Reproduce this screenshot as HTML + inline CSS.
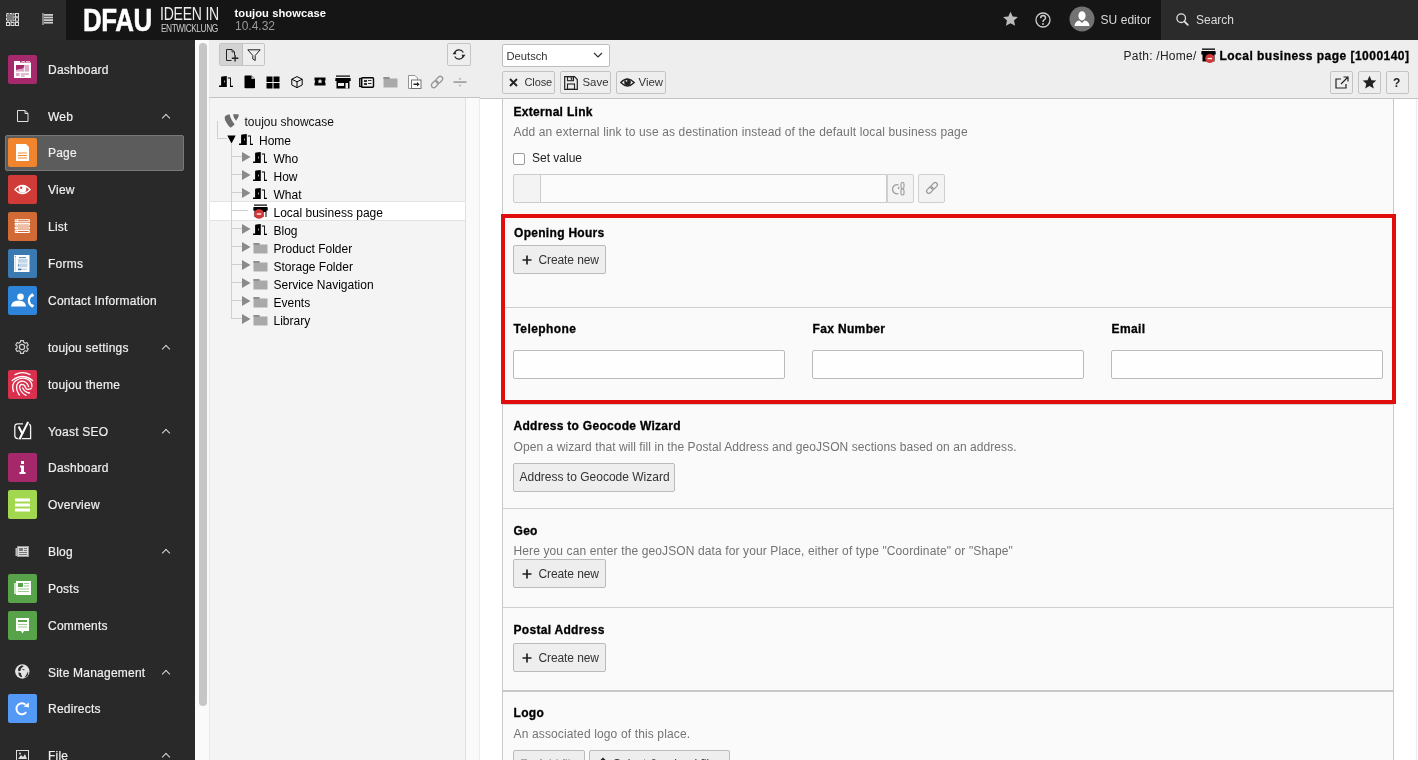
<!DOCTYPE html>
<html><head><meta charset="utf-8"><style>
*{box-sizing:border-box;margin:0;padding:0}
html,body{width:1418px;height:760px;overflow:hidden;background:#fff;font-family:"Liberation Sans",sans-serif;font-size:12px;color:#000}
.a{position:absolute}
.t{position:absolute;white-space:nowrap;line-height:12px}
svg{position:absolute;overflow:visible}
#top{left:0;top:0;width:1418px;height:40px;background:#151515}
#topl{left:0;top:0;width:66px;height:40px;background:#2a2a2a}
#search{left:1161px;top:0;width:257px;height:40px;background:#2b2b2b}
#mm{left:0;top:40px;width:195px;height:720px;background:#292929}
.mi{position:absolute;left:8px;width:29px;height:29px;border-radius:2px}
.ml{position:absolute;left:48px;color:#efefef;white-space:nowrap;line-height:12px;letter-spacing:0.22px;-webkit-text-stroke:0.2px #efefef}
.chev{position:absolute;left:163px;width:6px;height:6px;border-left:1.4px solid #d8d8d8;border-top:1.4px solid #d8d8d8;transform:rotate(45deg)}
#scr{left:195px;top:40px;width:14px;height:720px;background:#fafafa}
#thumb{left:199px;top:43px;width:8px;height:663px;background:#c6c6c6;border-radius:4px}
#tree{left:209px;top:40px;width:271px;height:720px;background:#f4f4f4;border-left:1px solid #e8e8e8}
#treetb{left:209px;top:40px;width:271px;height:58px;background:#eee;border-bottom:1px solid #c4c4c4}
#treer{left:465px;top:98px;width:15px;height:662px;background:#fafafa;border-left:1px solid #e0e0e0}
#dh{left:480px;top:40px;width:938px;height:59px;background:#eee;border-bottom:1px solid #c4c4c4}
.btn{position:absolute;background:#eee;border:1px solid #c3c3c3;border-radius:2px}
.sec{position:absolute;left:502px;width:892px;background:#fafafa;border-left:1px solid #c8c8c8;border-right:1px solid #c8c8c8}
.hr{position:absolute;left:502px;width:892px;height:1px;background:#cfcfcf}
.lbl{position:absolute;white-space:nowrap;font-weight:bold;letter-spacing:0.3px;line-height:12px;color:#000;-webkit-text-stroke:0.3px #000}
.desc{position:absolute;white-space:nowrap;color:#737373;letter-spacing:0.14px;line-height:12px}
.inp{position:absolute;background:#fefefe;border:1px solid #bbb;border-radius:2px}
.cbtn{position:absolute;background:#eee;border:1px solid #bbb;border-radius:2px;color:#333}
.tl{position:absolute;background:#cfcfcf}
.ti{position:absolute;white-space:nowrap;line-height:12px;color:#000}
</style></head><body><div id="wrap" style="position:absolute;left:0;top:0;width:1418px;height:760px;will-change:transform">
<div id="top" class="a"></div><div id="topl" class="a"></div><div id="search" class="a"></div>
<div id="mm" class="a"></div>
<div id="scr" class="a"></div><div id="thumb" class="a"></div><div id="tree" class="a"></div><div id="treetb" class="a"></div><div id="treer" class="a"></div>
<div id="dh" class="a"></div>
<div class="a" style="left:479px;top:98px;width:1px;height:662px;background:#ececec"></div>
<div class="a" style="left:5px;top:135px;width:179px;height:36px;background:#5c5c5c;border:1px solid #787878;border-radius:2px"></div>
<div class="mi" style="top:55px;background:#a6296b"></div>
<svg style="left:8px;top:55px" width="29" height="29"><rect x="6" y="7.5" width="17" height="15.5" fill="#fff"/><rect x="6" y="6" width="6" height="2" fill="#fff"/><rect x="13.5" y="6" width="3.5" height="1" fill="#e2b5cd"/><rect x="18" y="6" width="4" height="1" fill="#e2b5cd"/><rect x="8" y="10" width="8.3" height="6.6" fill="#dcaac6"/><path d="M8 10 H16.3 V11.5 L14.5 13.8 L11.5 14 L8 15Z" fill="#a6296b"/><rect x="17" y="10" width="4" height="6.6" fill="#dcaac6"/><rect x="8" y="18" width="3.6" height="3" fill="#dcaac6"/><rect x="13" y="18.5" width="8" height="1" fill="#c77aa3"/><rect x="13" y="20.5" width="3.5" height="1" fill="#c77aa3"/></svg>
<div class="ml" style="left:48px;top:63.90px;font-size:12px;line-height:12px;">Dashboard</div>
<div class="mi" style="top:138px;background:#f0852d"></div>
<svg style="left:8px;top:138px" width="29" height="29"><path d="M8 6 H18 L21 9 V23 H8Z" fill="#fff"/><rect x="10" y="14" width="9" height="2" fill="#f7c8a0"/><rect x="10" y="17" width="9" height="1" fill="#f0852d"/><rect x="10" y="19.5" width="9" height="1" fill="#f0852d"/></svg>
<div class="ml" style="left:48px;top:146.90px;font-size:12px;line-height:12px;">Page</div>
<div class="mi" style="top:175px;background:#d13b37"></div>
<svg style="left:8px;top:175px" width="29" height="29"><path d="M7 14.5 Q14.5 6.5 22 14.5 Q14.5 22.5 7 14.5Z" fill="none" stroke="#fff" stroke-width="1.4"/><circle cx="14.5" cy="14" r="3.8" fill="#fff"/><circle cx="13.2" cy="12.8" r="1.2" fill="#d13b37"/></svg>
<div class="ml" style="left:48px;top:183.90px;font-size:12px;line-height:12px;">View</div>
<div class="mi" style="top:212px;background:#d26a36"></div>
<svg style="left:8px;top:212px" width="29" height="29"><rect x="6.7" y="7.2" width="15.2" height="3" rx="0.8" fill="#fff"/><rect x="9.8" y="8.2" width="11" height="1" rx="0.5" fill="#d26a36"/><rect x="7.7" y="8.2" width="1" height="1" fill="#d26a36"/><rect x="6.7" y="10.8" width="15.2" height="3" rx="0.8" fill="#fff"/><rect x="9.8" y="11.8" width="11" height="1" rx="0.5" fill="#edbfa5"/><rect x="7.7" y="11.8" width="1" height="1" fill="#edbfa5"/><rect x="6.7" y="14.4" width="15.2" height="3" rx="0.8" fill="#fff"/><rect x="9.8" y="15.4" width="11" height="1" rx="0.5" fill="#edbfa5"/><rect x="7.7" y="15.4" width="1" height="1" fill="#edbfa5"/><rect x="6.7" y="18.0" width="15.2" height="3" rx="0.8" fill="#fff"/><rect x="9.8" y="19.0" width="11" height="1" rx="0.5" fill="#d26a36"/><rect x="7.7" y="19.0" width="1" height="1" fill="#d26a36"/><rect x="9.8" y="12.8" width="11" height="4.2" fill="#edbfa5"/></svg>
<div class="ml" style="left:48px;top:220.90px;font-size:12px;line-height:12px;">List</div>
<div class="mi" style="top:249px;background:#3a7ab0"></div>
<svg style="left:8px;top:249px" width="29" height="29"><rect x="6" y="6" width="15.5" height="17" fill="#fff"/><rect x="6.6" y="6.6" width="1.3" height="15.8" fill="#cfe0ef"/><rect x="7" y="7" width="0.8" height="0.8" fill="#3a7ab0"/><rect x="11" y="8.2" width="7" height="0.9" fill="#3a7ab0"/><rect x="10" y="10" width="9.5" height="3.8" fill="#c3d6e7"/><rect x="10" y="14.5" width="9.5" height="3.8" fill="#c3d6e7"/><rect x="10" y="15.5" width="0.9" height="1.6" fill="#3a7ab0"/><rect x="10" y="19.6" width="3.5" height="1.6" fill="#3a7ab0"/><rect x="14" y="19.6" width="5" height="1.6" fill="#c3d6e7"/></svg>
<div class="ml" style="left:48px;top:257.90px;font-size:12px;line-height:12px;">Forms</div>
<div class="mi" style="top:286px;background:#2e84d8"></div>
<svg style="left:8px;top:286px" width="29" height="29"><circle cx="12.5" cy="10.8" r="3.3" fill="#fff"/><path d="M3 20.5 Q3.5 14.5 10.5 14.5 Q17.5 14.5 18 20.5Z" fill="#fff"/><path d="M24.3 7.3 Q19.8 10 19.8 14.5 Q19.8 19 24.3 21.7 L26.2 19.6 Q25.2 18 23.4 18 Q22 16.3 22 14.5 Q22 12.7 23.4 11 Q25.2 11 26.2 9.4Z" fill="#fff"/></svg>
<div class="ml" style="left:48px;top:294.90px;font-size:12px;line-height:12px;">Contact Information</div>
<div class="mi" style="top:370px;background:#d9304e"></div>
<svg style="left:8px;top:370px" width="29" height="29"><path d="M7 4.6 Q14.5 0.8 22 4.6" fill="none" stroke="#fff" stroke-width="1.3" stroke-linecap="round"/><path d="M4.2 10.5 Q14.5 2.5 24.6 10.5" fill="none" stroke="#fff" stroke-width="1.3" stroke-linecap="round"/><path d="M5.5 21.5 Q3 14 8 10.5 Q14.5 6 21 10 Q24.5 13 23.8 17" fill="none" stroke="#fff" stroke-width="1.3" stroke-linecap="round"/><path d="M11.4 25 Q7.5 19.5 9 14.5 Q11 11 14.3 11.2 Q19 11.5 20.6 16.6" fill="none" stroke="#fff" stroke-width="1.3" stroke-linecap="round"/><path d="M18.1 25.3 Q12.5 22.5 11.6 17.5 Q11.5 14.5 14 14.3 Q16.8 14.3 17.5 17.5 Q18.5 20.5 23.2 18.6" fill="none" stroke="#fff" stroke-width="1.3" stroke-linecap="round"/><path d="M21.5 23 Q16.5 22 14.7 17.9" fill="none" stroke="#fff" stroke-width="1.3" stroke-linecap="round"/></svg>
<div class="ml" style="left:48px;top:378.90px;font-size:12px;line-height:12px;">toujou theme</div>
<div class="mi" style="top:453px;background:#a4286a"></div>
<svg style="left:8px;top:453px" width="29" height="29"><rect x="13" y="8" width="3" height="3" fill="#fff"/><path d="M12 12.5 H16 V19 H17.5 V21 H11.5 V19 H13 V14.5 H12Z" fill="#fff"/></svg>
<div class="ml" style="left:48px;top:461.90px;font-size:12px;line-height:12px;">Dashboard</div>
<div class="mi" style="top:490px;background:#a1d84f"></div>
<svg style="left:8px;top:490px" width="29" height="29"><rect x="7" y="8.5" width="15" height="3" fill="#fff"/><rect x="7" y="13.5" width="15" height="3" fill="#fff"/><rect x="7" y="18.5" width="15" height="3" fill="#fff"/></svg>
<div class="ml" style="left:48px;top:498.90px;font-size:12px;line-height:12px;">Overview</div>
<div class="mi" style="top:574px;background:#58a34a"></div>
<svg style="left:8px;top:574px" width="29" height="29"><rect x="6" y="9" width="3" height="11" fill="#c9e3c3"/><rect x="8" y="7" width="15" height="14" fill="#fff"/><rect x="10" y="9" width="5" height="4" fill="#58a34a"/><rect x="16" y="9" width="5" height="1" fill="#9cc994"/><rect x="16" y="11.5" width="5" height="1" fill="#9cc994"/><rect x="10" y="14.5" width="11" height="1" fill="#9cc994"/><rect x="10" y="17" width="11" height="1" fill="#9cc994"/></svg>
<div class="ml" style="left:48px;top:582.90px;font-size:12px;line-height:12px;">Posts</div>
<div class="mi" style="top:611px;background:#58a34a"></div>
<svg style="left:8px;top:611px" width="29" height="29"><path d="M8 7 H21 V20 H16 L14.5 22.5 L13 20 H8Z" fill="#fff"/><rect x="10" y="9" width="9" height="2" fill="#58a34a"/><rect x="10" y="13" width="9" height="1" fill="#9cc994"/><rect x="10" y="15.5" width="9" height="1" fill="#9cc994"/></svg>
<div class="ml" style="left:48px;top:619.90px;font-size:12px;line-height:12px;">Comments</div>
<div class="mi" style="top:694px;background:#5599f7"></div>
<svg style="left:8px;top:694px" width="29" height="29"><path d="M18.2 18.2 A5.5 5.5 0 1 1 17.6 10.6" fill="none" stroke="#fff" stroke-width="1.9"/><path d="M15.6 12.6 L20.9 8.6 L20.9 13.6Z" fill="#fff"/></svg>
<div class="ml" style="left:48px;top:702.90px;font-size:12px;line-height:12px;">Redirects</div>
<svg style="left:16px;top:109px" width="14" height="14"><path d="M1.5 1.5 H9 L12 4.5 V12.5 H1.5Z" fill="none" stroke="#e0e0e0" stroke-width="1"/><path d="M9 1.5 V4.5 H12" fill="none" stroke="#e0e0e0" stroke-width="1"/></svg>
<div class="ml" style="left:48px;top:110.70px;font-size:12px;line-height:12px;">Web</div>
<div class="chev" style="top:114.5px"></div>
<svg style="left:13.8px;top:339.0px" width="16" height="16"><path d="M6.37 3.27 L6.52 1.57 L9.48 1.57 L9.63 3.27 L11.28 4.23 L12.83 3.50 L14.31 6.07 L12.91 7.05 L12.91 8.95 L14.31 9.93 L12.83 12.50 L11.28 11.77 L9.63 12.73 L9.48 14.43 L6.52 14.43 L6.37 12.73 L4.72 11.77 L3.17 12.50 L1.69 9.93 L3.09 8.95 L3.09 7.05 L1.69 6.07 L3.17 3.50 L4.72 4.23Z" fill="none" stroke="#cfcfcf" stroke-width="1.2" stroke-linejoin="round"/><circle cx="8" cy="8" r="2.6" fill="none" stroke="#cfcfcf" stroke-width="1.2"/></svg>
<div class="ml" style="left:48px;top:342.20px;font-size:12px;line-height:12px;">toujou settings</div>
<div class="chev" style="top:346.0px"></div>
<svg style="left:14px;top:421px" width="18" height="20"><path d="M9 2.8 H3.8 Q0.8 2.8 0.8 5.8 V14.6 Q0.8 17.6 3.8 17.6 H16.6 V5.8 Q16.6 2.8 14 2.8" fill="none" stroke="#f2f2f2" stroke-width="1.3"/><path d="M4.4 5.6 L8.8 13.6" stroke="#292929" stroke-width="3.6"/><path d="M14.4 0.8 L5.6 18.6" stroke="#292929" stroke-width="3.4"/><path d="M4.6 5.6 L8.6 13.2" stroke="#fff" stroke-width="2.1"/><path d="M14.1 0.9 L5.5 18.2" stroke="#fff" stroke-width="2.1"/></svg>
<div class="ml" style="left:48px;top:425.70px;font-size:12px;line-height:12px;">Yoast SEO</div>
<div class="chev" style="top:429.5px"></div>
<svg style="left:15px;top:544.5px" width="15" height="13"><rect x="2" y="1" width="12" height="11" fill="#999" /><rect x="3" y="2" width="10" height="9" fill="#ddd"/><rect x="4" y="3" width="4" height="3" fill="#777"/><rect x="9" y="3" width="3" height="1" fill="#777"/><rect x="9" y="5" width="3" height="1" fill="#777"/><rect x="4" y="7" width="8" height="1" fill="#777"/><rect x="4" y="9" width="8" height="1" fill="#777"/><rect x="0.5" y="3" width="2" height="8" fill="#bbb"/></svg>
<div class="ml" style="left:48px;top:545.70px;font-size:12px;line-height:12px;">Blog</div>
<div class="chev" style="top:549.5px"></div>
<svg style="left:15px;top:663.8px" width="15" height="15"><circle cx="7.3" cy="7.5" r="7.2" fill="#e4e4e4"/><path d="M7.2 1.3 Q4.8 2 3.8 3.6 Q2.6 5.5 3.3 7.2 Q4.6 7.3 5.8 6.6 Q5.2 5 6.6 3.8 Q8 2.7 8.6 2.9Z M3.2 8.6 Q3.3 11 5.2 12.8 L7.2 13.2 Q6.9 11.4 6.2 10.8 Q6.6 9.4 5.2 8.8Z" fill="#2a2a2a"/><path d="M12.9 7.4 Q12 9.8 10.4 12.2 L9.2 13.4 Q11 13.4 12.3 12 Q13.4 10.2 13.2 8.2Z" fill="#2a2a2a"/><path d="M7.4 5.4 L9.5 5.9" stroke="#2a2a2a" stroke-width="0.9"/></svg>
<div class="ml" style="left:48px;top:666.70px;font-size:12px;line-height:12px;">Site Management</div>
<div class="chev" style="top:670.5px"></div>
<svg style="left:15px;top:748px" width="15" height="14"><rect x="1.5" y="2.5" width="12" height="10" fill="none" stroke="#ddd" stroke-width="1"/><path d="M3 11 L6 7 L8 9 L10 6 L12 11Z" fill="#ddd"/><circle cx="5" cy="5.5" r="1" fill="#ddd"/></svg>
<div class="ml" style="left:48px;top:749.70px;font-size:12px;line-height:12px;">File</div>
<div class="chev" style="top:753.5px"></div>
<svg style="left:6px;top:13px" width="13" height="13"><rect x="0.5" y="0.5" width="7.6" height="7.6" fill="#7a7a7a" stroke="#e0e0e0" stroke-width="1" stroke-dasharray="2.2 1.2"/><rect x="9.5" y="0.5" width="3" height="3.3" fill="none" stroke="#ddd" stroke-width="1"/><rect x="9.5" y="4.8" width="3" height="3.3" fill="none" stroke="#ddd" stroke-width="1"/><rect x="0.5" y="9.5" width="3" height="3" fill="none" stroke="#ddd" stroke-width="1"/><rect x="5" y="9.5" width="3" height="3" fill="none" stroke="#ddd" stroke-width="1"/><rect x="9.5" y="9.5" width="3" height="3" fill="none" stroke="#ddd" stroke-width="1"/></svg>
<svg style="left:42px;top:13px" width="12" height="12"><rect x="0.5" y="0" width="1" height="12" fill="#ddd"/><rect x="2" y="1.0" width="9" height="1.8" fill="#ccc"/><rect x="2" y="3.6" width="9" height="1.8" fill="#ccc"/><rect x="2" y="6.2" width="9" height="1.8" fill="#ccc"/><rect x="2" y="8.8" width="9" height="1.8" fill="#ccc"/></svg>
<div class="t" style="left:83px;top:5px;font-size:31px;line-height:31px;font-weight:bold;color:#fff;transform:scaleX(0.836);transform-origin:0 0;letter-spacing:-0.5px;-webkit-text-stroke:0.5px #fff">DFAU</div>
<div class="t" style="left:160px;top:5.8px;font-size:17.8px;line-height:17.8px;color:#eee;transform:scaleX(0.79);transform-origin:0 0;letter-spacing:-0.3px">IDEEN IN</div>
<div class="t" style="left:160.5px;top:22.5px;font-size:11px;line-height:11px;color:#ccc;transform:scaleX(0.76);transform-origin:0 0;letter-spacing:-0.6px">ENTWICKLUNG</div>
<div class="t" style="left:234.5px;top:7.90px;font-size:11px;line-height:11px;font-weight:bold;color:#fff;letter-spacing:0.05px;font-size:11.2px">toujou showcase</div>
<div class="t" style="left:235px;top:20.10px;font-size:12px;line-height:12px;color:#999">10.4.32</div>
<svg style="left:1002px;top:11px" width="17" height="16"><path d="M8.5 0.8 L10.7 5.6 L15.9 6.1 L12 9.6 L13.1 14.8 L8.5 12.2 L3.9 14.8 L5 9.6 L1.1 6.1 L6.3 5.6Z" fill="#bbb"/></svg>
<svg style="left:1035px;top:12px" width="16" height="16"><circle cx="8" cy="8" r="7" fill="none" stroke="#ccc" stroke-width="1.3"/><path d="M5.6 6.2 Q5.8 3.6 8.2 3.6 Q10.6 3.8 10.5 6 Q10.4 7.4 8.8 8.2 Q8 8.7 8 10" fill="none" stroke="#ccc" stroke-width="1.5"/><circle cx="8" cy="12" r="0.9" fill="#ccc"/></svg>
<svg style="left:1069px;top:6px" width="26" height="26"><circle cx="13" cy="13" r="12.5" fill="#737373"/><ellipse cx="13" cy="9.8" rx="3.6" ry="4.6" fill="#fff"/><path d="M5.5 20 Q6 15 10.5 14.5 L13 17 L15.5 14.5 Q20 15 20.5 20Z" fill="#fff"/></svg>
<div class="t" style="left:1100.5px;top:13.60px;font-size:12px;line-height:12px;color:#dcdcdc;letter-spacing:0.05px">SU editor</div>
<svg style="left:1176px;top:13px" width="13" height="13"><circle cx="5.2" cy="5.2" r="4.3" fill="none" stroke="#e0e0e0" stroke-width="1.3"/><path d="M8.3 8.3 L11.8 11.8" stroke="#e0e0e0" stroke-width="1.8" stroke-linecap="round"/></svg>
<div class="t" style="left:1196px;top:14.30px;font-size:12px;line-height:12px;color:#dcdcdc">Search</div>
<div class="a" style="left:219px;top:43px;width:46px;height:23px;border:1px solid #c4c4c4;border-radius:2px;background:#eee;overflow:hidden"><div class="a" style="left:0;top:0;width:23px;height:21px;background:#d3d3d3;border-right:1px solid #c0c0c0"></div></div>
<svg style="left:225px;top:48px" width="15" height="15"><path d="M6.5 12.5 H1.5 V1.5 H7 L9.5 4 V7" fill="none" stroke="#222" stroke-width="1" stroke-linejoin="miter"/><path d="M7 1.5 V4 H9.5" fill="none" stroke="#222" stroke-width="0.8"/><path d="M6.8 10.2 H13.4 M10.1 6.9 V13.5" stroke="#222" stroke-width="1.4"/></svg>
<svg style="left:247px;top:49px" width="14" height="13"><path d="M0.8 0.8 H13.2 L8.2 6.5 V11.5 L5.8 10 V6.5Z" fill="none" stroke="#222" stroke-width="1"/></svg>
<div class="a" style="left:447px;top:43px;width:24px;height:23px;border:1px solid #c4c4c4;border-radius:2px;background:#eee"></div>
<svg style="left:452px;top:48px" width="14" height="13"><path d="M2.5 5.2 A4.8 4.8 0 0 1 11.3 4.5" fill="none" stroke="#222" stroke-width="1.2"/><path d="M11.5 7.8 A4.8 4.8 0 0 1 2.7 8.5" fill="none" stroke="#222" stroke-width="1.2"/><path d="M0.5 6.3 L2.6 3.6 L4.6 6.3Z" fill="#222"/><path d="M9.4 6.7 L11.4 9.4 L13.5 6.7Z" fill="#222"/></svg>
<svg style="left:219px;top:76px" width="15" height="12"><path d="M0 9.6 H2.1 V1.2 Q2.2 0.6 3 0.5 L7.8 -0.1 V11.1 H0Z" fill="#000"/><rect x="5" y="4.6" width="0.9" height="1.8" fill="#bbb"/><path d="M8.8 1.4 H11.9 V9.7 H14 V11.1 H11 V2.6 H8.8Z" fill="#000"/></svg>
<svg style="left:244px;top:75px" width="12" height="14"><path d="M0.5 1.5 Q0.5 0.5 1.5 0.5 H7.5 L11 4 V12.5 Q11 13.3 10 13.3 H1.5 Q0.5 13.3 0.5 12.5Z" fill="#000"/><path d="M7.5 0.5 V4 H11" fill="#bbb"/></svg>
<svg style="left:266px;top:76px" width="14" height="13"><rect x="0.5" y="0.5" width="6" height="5.5" fill="#000"/><rect x="7.5" y="0.5" width="6" height="5.5" fill="#000"/><rect x="0.5" y="7" width="6" height="5.5" fill="#000"/><rect x="7.5" y="7" width="6" height="5.5" fill="#000"/></svg>
<svg style="left:290.5px;top:76px" width="13" height="13"><path d="M6 0.6 L11.2 3.2 V9 L6 11.6 L0.8 9 V3.2Z M0.8 3.2 L6 5.8 L11.2 3.2 M6 5.8 V11.6" fill="none" stroke="#000" stroke-width="1"/></svg>
<svg style="left:314px;top:77px" width="12" height="9"><path d="M0.5 0.5 H11.5 V3 Q10 4.5 11.5 6 V8.5 H0.5 V6 Q2 4.5 0.5 3Z" fill="#000"/><path d="M6 1.8 L6.8 3.6 L8.6 3.7 L7.2 4.8 L7.7 6.6 L6 5.6 L4.3 6.6 L4.8 4.8 L3.4 3.7 L5.2 3.6Z" fill="#eee"/></svg>
<svg style="left:335px;top:75px" width="16" height="14"><rect x="1" y="0.5" width="14" height="1.2" fill="#000"/><path d="M0.5 3 H15.5 L15.8 6 H0.2Z" fill="#000"/><rect x="1.5" y="6" width="13" height="7.5" fill="#000"/><rect x="3" y="8" width="6" height="3" fill="#eee"/><rect x="10.5" y="8" width="2.5" height="5.5" fill="#eee"/></svg>
<svg style="left:359px;top:77px" width="15" height="11"><rect x="0.7" y="1.5" width="2" height="8" fill="none" stroke="#000" stroke-width="1.2"/><rect x="2.5" y="0.7" width="12" height="9.6" rx="1" fill="none" stroke="#000" stroke-width="1.4"/><rect x="5" y="3" width="3" height="2" fill="#333"/><rect x="9" y="3" width="3.5" height="1" fill="#333"/><rect x="5" y="6" width="3" height="2" fill="#333"/><rect x="9" y="6" width="3.5" height="1" fill="#333"/></svg>
<svg style="left:383px;top:76px" width="15" height="12"><path d="M0.5 1 H6 L7 2.5 H14.5 V11.5 H0.5Z" fill="#a9a9a9"/><rect x="0.5" y="1" width="6" height="2" fill="#8f8f8f"/></svg>
<svg style="left:408px;top:75px" width="14" height="14"><path d="M0.5 0.5 H7 L9.5 3 V13.5 H0.5Z" fill="#fafafa" stroke="#888" stroke-width="0.9"/><rect x="3.5" y="5" width="9.5" height="8.5" fill="#fff" stroke="#666" stroke-width="0.9"/><path d="M5.5 10 H9 V11.5 L11.5 9.2 L9 7 V8.5 H5.5Z" fill="#222"/></svg>
<svg style="left:430px;top:75px" width="14" height="14"><g transform="rotate(-45 7 7)"><rect x="0" y="4.6" width="7.6" height="4.8" rx="2.4" fill="none" stroke="#999" stroke-width="1.3"/><rect x="6.4" y="4.6" width="7.6" height="4.8" rx="2.4" fill="none" stroke="#999" stroke-width="1.3"/></g></svg>
<svg style="left:453px;top:76px" width="14" height="12"><rect x="0.5" y="5.3" width="13" height="1.6" fill="#999"/><path d="M5.5 3.5 L7 1.5 L8.5 3.5Z M5.5 8.8 L7 10.8 L8.5 8.8Z" fill="#aaa"/></svg>
<div class="a" style="left:210px;top:201px;width:255px;height:20px;background:#fff;border-top:1px solid #e3e3e3;border-bottom:1px solid #e3e3e3"></div>
<div class="tl" style="left:217px;top:121px;width:1px;height:18px"></div><div class="tl" style="left:217px;top:138px;width:10px;height:1px"></div>
<div class="tl" style="left:231px;top:144px;width:1px;height:175px"></div>
<div class="tl" style="left:231px;top:156px;width:12px;height:1px"></div>
<div class="tl" style="left:231px;top:174px;width:12px;height:1px"></div>
<div class="tl" style="left:231px;top:192px;width:12px;height:1px"></div>
<div class="tl" style="left:231px;top:210px;width:17px;height:1px"></div>
<div class="tl" style="left:231px;top:228px;width:12px;height:1px"></div>
<div class="tl" style="left:231px;top:246px;width:12px;height:1px"></div>
<div class="tl" style="left:231px;top:264px;width:12px;height:1px"></div>
<div class="tl" style="left:231px;top:282px;width:12px;height:1px"></div>
<div class="tl" style="left:231px;top:300px;width:12px;height:1px"></div>
<div class="tl" style="left:231px;top:318px;width:12px;height:1px"></div>
<svg style="left:224px;top:114px" width="16" height="14"><path d="M0.8 2.6 Q2.5 0.6 5.6 0.2 Q6.2 4.5 10.6 10.3 Q8.5 13 6.5 13.8 Q3.5 11 1.2 6.5 Q0.5 4.5 0.8 2.6Z" fill="#6d6d6d"/><path d="M9 0.3 L14.6 0.3 Q15 1.5 14.2 3.2 L12 6.8 Q9.6 4 9 0.3Z" fill="#6d6d6d"/></svg>
<div class="ti" style="left:244.5px;top:116.10px;font-size:12px;line-height:12px;color:#111">toujou showcase</div>
<svg style="left:227px;top:135px" width="9" height="9"><path d="M0.3 0.5 H8.7 L4.5 8.5Z" fill="#000"/></svg>
<svg style="left:239px;top:133.5px" width="15" height="12"><path d="M0 9.6 H2.1 V1.2 Q2.2 0.6 3 0.5 L7.8 -0.1 V11.1 H0Z" fill="#000"/><rect x="5" y="4.6" width="0.9" height="1.8" fill="#bbb"/><path d="M8.8 1.4 H11.9 V9.7 H14 V11.1 H11 V2.6 H8.8Z" fill="#000"/></svg>
<div class="ti" style="left:259px;top:134.60px;font-size:12px;line-height:12px;">Home</div>
<svg style="left:242px;top:152px" width="9" height="10"><path d="M0 0 V10 L8.5 5Z" fill="#8a8a8a"/></svg>
<svg style="left:253px;top:151.5px" width="15" height="12"><path d="M0 9.6 H2.1 V1.2 Q2.2 0.6 3 0.5 L7.8 -0.1 V11.1 H0Z" fill="#000"/><rect x="5" y="4.6" width="0.9" height="1.8" fill="#bbb"/><path d="M8.8 1.4 H11.9 V9.7 H14 V11.1 H11 V2.6 H8.8Z" fill="#000"/></svg>
<div class="ti" style="left:273.5px;top:152.60px;font-size:12px;line-height:12px;">Who</div>
<svg style="left:242px;top:170px" width="9" height="10"><path d="M0 0 V10 L8.5 5Z" fill="#8a8a8a"/></svg>
<svg style="left:253px;top:169.5px" width="15" height="12"><path d="M0 9.6 H2.1 V1.2 Q2.2 0.6 3 0.5 L7.8 -0.1 V11.1 H0Z" fill="#000"/><rect x="5" y="4.6" width="0.9" height="1.8" fill="#bbb"/><path d="M8.8 1.4 H11.9 V9.7 H14 V11.1 H11 V2.6 H8.8Z" fill="#000"/></svg>
<div class="ti" style="left:273.5px;top:170.60px;font-size:12px;line-height:12px;">How</div>
<svg style="left:242px;top:188px" width="9" height="10"><path d="M0 0 V10 L8.5 5Z" fill="#8a8a8a"/></svg>
<svg style="left:253px;top:187.5px" width="15" height="12"><path d="M0 9.6 H2.1 V1.2 Q2.2 0.6 3 0.5 L7.8 -0.1 V11.1 H0Z" fill="#000"/><rect x="5" y="4.6" width="0.9" height="1.8" fill="#bbb"/><path d="M8.8 1.4 H11.9 V9.7 H14 V11.1 H11 V2.6 H8.8Z" fill="#000"/></svg>
<div class="ti" style="left:273.5px;top:188.60px;font-size:12px;line-height:12px;">What</div>
<svg style="left:253px;top:204px" width="15" height="15"><rect x="1" y="0.5" width="13" height="1.2" fill="#000"/><path d="M0.5 3 H14.5 L14.8 6.5 H0.2Z" fill="#000"/><rect x="1.5" y="6" width="12" height="7" fill="#000"/><rect x="10.5" y="8" width="2" height="5.5" fill="#fff"/><circle cx="6" cy="10" r="4.8" fill="#d23838"/><rect x="3.8" y="9.4" width="4.4" height="1.3" fill="#fff"/></svg>
<div class="ti" style="left:273.5px;top:206.60px;font-size:12px;line-height:12px;">Local business page</div>
<svg style="left:242px;top:224px" width="9" height="10"><path d="M0 0 V10 L8.5 5Z" fill="#8a8a8a"/></svg>
<svg style="left:253px;top:223.5px" width="15" height="12"><path d="M0 9.6 H2.1 V1.2 Q2.2 0.6 3 0.5 L7.8 -0.1 V11.1 H0Z" fill="#000"/><rect x="5" y="4.6" width="0.9" height="1.8" fill="#bbb"/><path d="M8.8 1.4 H11.9 V9.7 H14 V11.1 H11 V2.6 H8.8Z" fill="#000"/></svg>
<div class="ti" style="left:273.5px;top:224.60px;font-size:12px;line-height:12px;">Blog</div>
<svg style="left:242px;top:242px" width="9" height="10"><path d="M0 0 V10 L8.5 5Z" fill="#8a8a8a"/></svg>
<svg style="left:253px;top:241.5px" width="15" height="12"><path d="M0.5 1 H6 L7 2.5 H14.5 V11.5 H0.5Z" fill="#a9a9a9"/><rect x="0.5" y="1" width="6" height="2" fill="#8f8f8f"/></svg>
<div class="ti" style="left:273.5px;top:242.60px;font-size:12px;line-height:12px;">Product Folder</div>
<svg style="left:242px;top:260px" width="9" height="10"><path d="M0 0 V10 L8.5 5Z" fill="#8a8a8a"/></svg>
<svg style="left:253px;top:259.5px" width="15" height="12"><path d="M0.5 1 H6 L7 2.5 H14.5 V11.5 H0.5Z" fill="#a9a9a9"/><rect x="0.5" y="1" width="6" height="2" fill="#8f8f8f"/></svg>
<div class="ti" style="left:273.5px;top:260.60px;font-size:12px;line-height:12px;">Storage Folder</div>
<svg style="left:242px;top:278px" width="9" height="10"><path d="M0 0 V10 L8.5 5Z" fill="#8a8a8a"/></svg>
<svg style="left:253px;top:277.5px" width="15" height="12"><path d="M0.5 1 H6 L7 2.5 H14.5 V11.5 H0.5Z" fill="#a9a9a9"/><rect x="0.5" y="1" width="6" height="2" fill="#8f8f8f"/></svg>
<div class="ti" style="left:273.5px;top:278.60px;font-size:12px;line-height:12px;">Service Navigation</div>
<svg style="left:242px;top:296px" width="9" height="10"><path d="M0 0 V10 L8.5 5Z" fill="#8a8a8a"/></svg>
<svg style="left:253px;top:295.5px" width="15" height="12"><path d="M0.5 1 H6 L7 2.5 H14.5 V11.5 H0.5Z" fill="#a9a9a9"/><rect x="0.5" y="1" width="6" height="2" fill="#8f8f8f"/></svg>
<div class="ti" style="left:273.5px;top:296.60px;font-size:12px;line-height:12px;">Events</div>
<svg style="left:242px;top:314px" width="9" height="10"><path d="M0 0 V10 L8.5 5Z" fill="#8a8a8a"/></svg>
<svg style="left:253px;top:313.5px" width="15" height="12"><path d="M0.5 1 H6 L7 2.5 H14.5 V11.5 H0.5Z" fill="#a9a9a9"/><rect x="0.5" y="1" width="6" height="2" fill="#8f8f8f"/></svg>
<div class="ti" style="left:273.5px;top:314.60px;font-size:12px;line-height:12px;">Library</div>
<div class="a" style="left:502px;top:44px;width:108px;height:23px;background:#fff;border:1px solid #bdbdbd;border-radius:2px"></div>
<div class="t" style="left:506.5px;top:50.90px;font-size:11px;line-height:11px;color:#333;font-size:11.2px">Deutsch</div>
<svg style="left:593px;top:52px" width="10" height="7"><path d="M1 1 L5 5 L9 1" fill="none" stroke="#333" stroke-width="1.2"/></svg>
<div class="btn" style="left:502px;top:71px;width:53px;height:23px"></div>
<div class="btn" style="left:560px;top:71px;width:51px;height:23px"></div>
<div class="btn" style="left:616px;top:71px;width:50px;height:23px"></div>
<svg style="left:509px;top:78px" width="9" height="9"><path d="M1 1 L8 8 M8 1 L1 8" stroke="#222" stroke-width="1.8"/></svg>
<div class="t" style="left:524.5px;top:76.90px;font-size:11px;line-height:11px;color:#333;letter-spacing:-0.1px">Close</div>
<svg style="left:564px;top:76px" width="14" height="14"><path d="M0.7 0.7 H10.5 L13.3 3.5 V13.3 H0.7Z" fill="none" stroke="#222" stroke-width="1.2"/><rect x="3.5" y="0.7" width="6" height="4" fill="none" stroke="#222" stroke-width="1.1"/><rect x="6.8" y="1.5" width="1.5" height="2.3" fill="#222"/><rect x="3.5" y="8" width="7" height="5.3" fill="none" stroke="#222" stroke-width="1.1"/></svg>
<div class="t" style="left:582.5px;top:76.90px;font-size:11px;line-height:11px;color:#333;font-size:11.4px">Save</div>
<svg style="left:620px;top:77px" width="15" height="11"><path d="M0.8 5.5 Q7.5 -1.5 14.2 5.5 Q7.5 12.5 0.8 5.5Z" fill="none" stroke="#222" stroke-width="1.3"/><circle cx="7.5" cy="5" r="3.3" fill="#222"/><circle cx="6.5" cy="3.8" r="0.9" fill="#eee"/></svg>
<div class="t" style="left:638.5px;top:76.90px;font-size:11px;line-height:11px;color:#333;font-size:11.4px">View</div>
<div class="t" style="left:1123.5px;top:50.10px;font-size:12px;line-height:12px;color:#222;letter-spacing:0.25px">Path: /Home/</div>
<svg style="left:1201px;top:48px" width="16" height="16"><rect x="1" y="0.5" width="13" height="1.3" fill="#000"/><path d="M0.5 3 H14.5 L14.8 6.5 H0.2Z" fill="#000"/><rect x="1.5" y="6" width="12" height="7.5" fill="#000"/><rect x="10.5" y="8" width="2" height="5.5" fill="#eee"/><circle cx="8.8" cy="10.5" r="4.6" fill="#d23838"/><rect x="6.6" y="9.9" width="4.4" height="1.3" fill="#fff"/></svg>
<div class="t" style="left:1219.5px;top:50.10px;font-size:12px;line-height:12px;font-weight:bold;color:#000;letter-spacing:0.48px;-webkit-text-stroke:0.3px #000">Local business page [1000140]</div>
<div class="btn" style="left:1330px;top:71px;width:23px;height:23px"></div>
<div class="btn" style="left:1358px;top:71px;width:23px;height:23px"></div>
<div class="btn" style="left:1386px;top:71px;width:23px;height:23px"></div>
<svg style="left:1335px;top:76px" width="14" height="13"><path d="M6 3 H1 V12 H11 V8" fill="none" stroke="#222" stroke-width="1.2"/><path d="M6 8 L12.5 1.5 M8.5 1 H13 V5.5" fill="none" stroke="#222" stroke-width="1.2"/></svg>
<svg style="left:1362px;top:75px" width="15" height="15"><path d="M7.5 0.8 L9.5 5.2 L14.3 5.6 L10.7 8.8 L11.8 13.5 L7.5 11 L3.2 13.5 L4.3 8.8 L0.7 5.6 L5.5 5.2Z" fill="#222"/></svg>
<div class="t" style="left:1393px;top:77.10px;font-size:12px;line-height:12px;font-weight:bold;color:#222">?</div>
<div class="sec" style="top:99px;height:661px"></div>
<div class="lbl" style="left:513.5px;top:105.60px;font-size:12px;line-height:12px;">External Link</div>
<div class="desc" style="left:513.5px;top:126.10px;font-size:12px;line-height:12px;">Add an external link to use as destination instead of the default local business page</div>
<div class="a" style="left:513px;top:153px;width:12px;height:12px;background:#fff;border:1px solid #999;border-radius:2px"></div>
<div class="t" style="left:532px;top:151.60px;font-size:12px;line-height:12px;color:#222">Set value</div>
<div class="a" style="left:513px;top:174px;width:28px;height:29px;background:#f3f3f3;border:1px solid #ccc;border-radius:2px 0 0 2px"></div>
<div class="a" style="left:540px;top:174px;width:347px;height:29px;background:#fbfbfb;border:1px solid #ccc"></div>
<div class="a" style="left:887px;top:174px;width:27px;height:29px;background:#f3f3f3;border:1px solid #d0d0d0;border-radius:0 2px 2px 0"></div>
<div class="a" style="left:918px;top:174px;width:27px;height:29px;background:#f3f3f3;border:1px solid #d0d0d0;border-radius:2px"></div>
<svg style="left:893px;top:181px" width="14" height="15"><path d="M5.5 4 A4.5 4.5 0 1 0 5.5 12.5" fill="none" stroke="#999" stroke-width="1.2"/><path d="M6 5 L4.5 8 L6.5 8Z" fill="#999"/><rect x="8" y="1.5" width="3" height="6" rx="1.5" fill="none" stroke="#999" stroke-width="1.1"/><rect x="8" y="8" width="3" height="6" rx="1.5" fill="none" stroke="#999" stroke-width="1.1"/></svg>
<svg style="left:925px;top:181px" width="14" height="14"><g transform="rotate(-45 7 7)"><rect x="0.3" y="4.8" width="7.4" height="4.4" rx="2.2" fill="none" stroke="#999" stroke-width="1.2"/><rect x="6.3" y="4.8" width="7.4" height="4.4" rx="2.2" fill="none" stroke="#999" stroke-width="1.2"/></g></svg>
<div class="lbl" style="left:514px;top:227.10px;font-size:12px;line-height:12px;">Opening Hours</div>
<div class="cbtn" style="left:513px;top:245px;width:93px;height:29px"></div>
<svg style="left:522px;top:255px" width="10" height="10"><path d="M5 0.5 V9.5 M0.5 5 H9.5" stroke="#222" stroke-width="1.7"/></svg>
<div class="t" style="left:538.5px;top:254.10px;font-size:12px;line-height:12px;color:#333;letter-spacing:-0.1px">Create new</div>
<div class="hr" style="top:307px"></div>
<div class="lbl" style="left:513.5px;top:323.10px;font-size:12px;line-height:12px;letter-spacing:0.4px">Telephone</div>
<div class="lbl" style="left:812.5px;top:323.10px;font-size:12px;line-height:12px;letter-spacing:0.35px">Fax Number</div>
<div class="lbl" style="left:1111.5px;top:323.10px;font-size:12px;line-height:12px;letter-spacing:0.4px">Email</div>
<div class="inp" style="left:513px;top:350px;width:272px;height:29px"></div>
<div class="inp" style="left:812px;top:350px;width:272px;height:29px"></div>
<div class="inp" style="left:1111px;top:350px;width:272px;height:29px"></div>
<div class="hr" style="top:404px"></div>
<div class="lbl" style="left:513.5px;top:420.10px;font-size:12px;line-height:12px;">Address to Geocode Wizard</div>
<div class="desc" style="left:513.5px;top:441.10px;font-size:12px;line-height:12px;letter-spacing:0.075px">Open a wizard that will fill in the Postal Address and geoJSON sections based on an address.</div>
<div class="cbtn" style="left:513px;top:463px;width:162px;height:29px"></div>
<div class="t" style="left:519.5px;top:471.10px;font-size:12px;line-height:12px;color:#333">Address to Geocode Wizard</div>
<div class="hr" style="top:508px"></div>
<div class="lbl" style="left:513.5px;top:525.10px;font-size:12px;line-height:12px;">Geo</div>
<div class="desc" style="left:513.5px;top:545.10px;font-size:12px;line-height:12px;letter-spacing:0.12px">Here you can enter the geoJSON data for your Place, either of type "Coordinate" or "Shape"</div>
<div class="cbtn" style="left:513px;top:559px;width:93px;height:29px"></div>
<svg style="left:522px;top:569px" width="10" height="10"><path d="M5 0.5 V9.5 M0.5 5 H9.5" stroke="#222" stroke-width="1.7"/></svg>
<div class="t" style="left:538.5px;top:568.10px;font-size:12px;line-height:12px;color:#333;letter-spacing:-0.1px">Create new</div>
<div class="hr" style="top:607px"></div>
<div class="lbl" style="left:513.5px;top:624.10px;font-size:12px;line-height:12px;">Postal Address</div>
<div class="cbtn" style="left:513px;top:643px;width:93px;height:29px"></div>
<svg style="left:522px;top:653px" width="10" height="10"><path d="M5 0.5 V9.5 M0.5 5 H9.5" stroke="#222" stroke-width="1.7"/></svg>
<div class="t" style="left:538.5px;top:652.10px;font-size:12px;line-height:12px;color:#333;letter-spacing:-0.1px">Create new</div>
<div class="hr" style="top:690px;height:2px;background:#c8c8c8"></div>
<div class="lbl" style="left:513.5px;top:707.10px;font-size:12px;line-height:12px;">Logo</div>
<div class="desc" style="left:513.5px;top:728.10px;font-size:12px;line-height:12px;">An associated logo of this place.</div>
<div class="cbtn" style="left:513px;top:750px;width:72px;height:29px"></div>
<div class="cbtn" style="left:589px;top:750px;width:141px;height:29px"></div>
<div class="a" style="left:521px;top:758.5px;width:6px;height:6px;background:#aaa"></div>
<div class="t" style="left:537px;top:757.70px;font-size:12px;line-height:12px;color:#999">Add file</div>
<svg style="left:598px;top:757px" width="10" height="10"><path d="M5 0.5 L9 4.5 H6.3 V9 H3.7 V4.5 H1Z" fill="#222"/></svg>
<div class="t" style="left:613px;top:757.70px;font-size:12px;line-height:12px;color:#333">Select &amp; upload files</div>
<div class="a" style="left:1416px;top:99px;width:1px;height:661px;background:#eee"></div>
<div class="a" style="left:501px;top:214px;width:895px;height:190px;border:4px solid #e10e0e"></div>
</div></body></html>
